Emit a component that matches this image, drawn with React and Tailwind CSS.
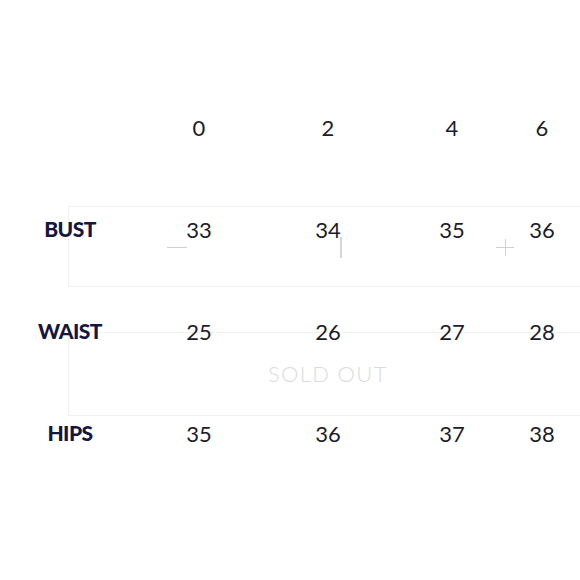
export default function App() {
  const header = ["", "0", "2", "4", "6"];
  const rows = [
    ["BUST", "33", "34", "35", "36"],
    ["WAIST", "25", "26", "27", "28"],
    ["HIPS", "35", "36", "37", "38"],
  ];
  const cols = "grid grid-cols-[140px_118px_140px_108px_72px] h-[102px] items-center";
  return (
    <div className="relative w-[580px] h-[580px] bg-white overflow-hidden font-['Lato',sans-serif]">
      {/* ghost overlay boxes */}
      <div className="absolute left-[68px] top-[206px] w-[540px] h-[81px] border border-[#f1f1f1]" />
      <div className="absolute left-[68px] top-[332px] w-[540px] h-[84px] border border-[#f1f1f1]" />
      <div className="absolute left-[167px] top-[247px] w-[20px] h-[1px] bg-[#cfcfcf]" />
      <div className="absolute left-[340px] top-[237px] w-[2px] h-[21px] bg-[#d6d6d6]" />
      <div className="absolute left-[496px] top-[247px] w-[18px] h-[1px] bg-[#d0d0d0]" />
      <div className="absolute left-[505px] top-[239px] w-[1px] h-[17px] bg-[#d0d0d0]" />
      <div className="absolute left-[268px] top-[361px] text-[22px] leading-[26px] font-light tracking-[0.06em] text-[#dcdcdc]">
        SOLD OUT
      </div>

      <div className="relative pt-[76px]">
        <div className={cols}>
          {header.map((h, i) => (
            <div key={i} className="text-center text-[22px] text-[#1c1c2a]">{h}</div>
          ))}
        </div>
        {rows.map((r) => (
          <div key={r[0]} className={cols}>
            {r.map((c, i) =>
              i === 0 ? (
                <div key={i} className="text-center text-[21px] font-black text-[#15173d] tracking-tight">{c}</div>
              ) : (
                <div key={i} className="text-center text-[22px] text-[#1c1c2a]">{c}</div>
              )
            )}
          </div>
        ))}
      </div>
    </div>
  );
}
